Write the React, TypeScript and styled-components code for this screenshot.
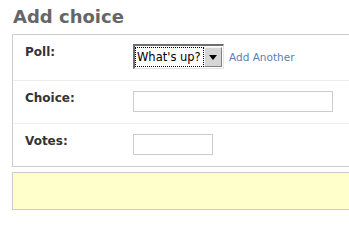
import React from 'react';
import styled, { createGlobalStyle } from 'styled-components';

const GlobalStyle = createGlobalStyle`
  html, body {
    margin: 0;
    padding: 0;
    overflow: hidden;
    background: #fff;
  }
  body {
    font-family: "DejaVu Sans", Verdana, sans-serif;
    color: #333;
  }
`;

const Page = styled.div`
  width: 460px;
  padding: 6px 0 0 12px;
`;

const Title = styled.h1`
  margin: 0 0 7px 1px;
  font-size: 18px;
  line-height: 21px;
  font-weight: bold;
  color: #666;
`;

const Fieldset = styled.div`
  border: 1px solid #ccc;
`;

const Row = styled.div<{ $last?: boolean }>`
  display: flex;
  align-items: flex-start;
  padding: 10px 10px 11px 12px;
  border-bottom: ${(p) => (p.$last ? 'none' : '1px solid #eee')};
`;

const Label = styled.label`
  width: 108px;
  flex-shrink: 0;
  font-size: 12px;
  line-height: 14px;
  font-weight: bold;
  color: #333;
`;

const Field = styled.div`
  display: flex;
  align-items: center;
  gap: 5px;
`;

const SelectBox = styled.div`
  display: flex;
  align-items: stretch;
  width: 91px;
  height: 25px;
  margin-top: -1px;
  box-sizing: border-box;
  border-style: solid;
  border-width: 2px 1px 1px 2px;
  border-color: #6f6f6f #e4e4e4 #e4e4e4 #6f6f6f;
  background: #fff;
  padding: 1px 1px 1px 0;
`;

const SelectValue = styled.div`
  flex: 1;
  display: flex;
  align-items: center;
  padding-left: 1px;
  border: 1px dotted #000;
  font-size: 11.5px;
  color: #000;
  white-space: nowrap;
  overflow: hidden;
`;

const SelectButton = styled.div`
  width: 16px;
  flex-shrink: 0;
  display: flex;
  align-items: center;
  justify-content: center;
  background: #d6d6d6;
  border-style: solid;
  border-width: 1px;
  border-color: #f4f4f4 #808080 #808080 #f4f4f4;
`;

const Arrow = styled.span`
  width: 0;
  height: 0;
  border-left: 4px solid transparent;
  border-right: 4px solid transparent;
  border-top: 5px solid #000;
`;

const AddLink = styled.a`
  font-size: 10.5px;
  color: #5b80b2;
  text-decoration: none;
`;

const TextInput = styled.div<{ $width: number }>`
  width: ${(p) => p.$width}px;
  height: 21px;
  box-sizing: border-box;
  border: 1px solid #ccc;
  background: #fff;
`;

const SubmitRow = styled.div`
  margin-top: 5px;
  height: 38px;
  box-sizing: border-box;
  border: 1px solid #ccc;
  background: #ffffcc;
`;

const App: React.FC = () => {
  return (
    <>
      <GlobalStyle />
      <Page>
        <Title>Add choice</Title>
        <Fieldset>
          <Row>
            <Label>Poll:</Label>
            <Field>
              <SelectBox>
                <SelectValue>What's up?</SelectValue>
                <SelectButton>
                  <Arrow />
                </SelectButton>
              </SelectBox>
              <AddLink href="#">Add Another</AddLink>
            </Field>
          </Row>
          <Row>
            <Label>Choice:</Label>
            <TextInput $width={200} />
          </Row>
          <Row $last>
            <Label>Votes:</Label>
            <TextInput $width={80} />
          </Row>
        </Fieldset>
        <SubmitRow />
      </Page>
    </>
  );
};

export default App;
